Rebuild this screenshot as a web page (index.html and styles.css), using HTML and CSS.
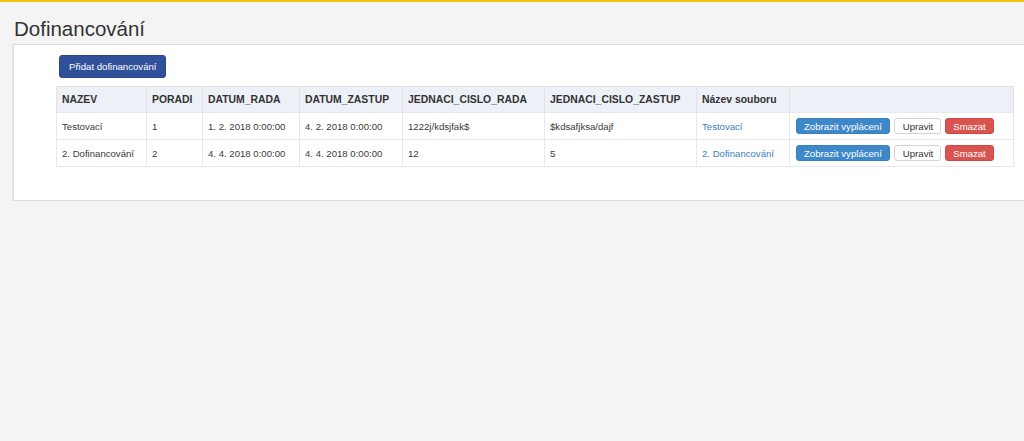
FILE: index.html
```html
<!DOCTYPE html>
<html lang="cs">
<head>
<meta charset="utf-8">
<title>Dofinancování</title>
<link rel="stylesheet" href="styles.css">
</head>
<body>
<div class="topbar"></div>
<h1 class="title">Dofinancování</h1>
<div class="panel">
  <button class="btn btn-add">Přidat dofinancování</button>
  <table class="grid">
    <colgroup>
      <col class="c1"><col class="c2"><col class="c3"><col class="c4"><col class="c5"><col class="c6"><col class="c7"><col class="c8">
    </colgroup>
    <thead>
      <tr>
        <th>NAZEV</th>
        <th>PORADI</th>
        <th>DATUM_RADA</th>
        <th>DATUM_ZASTUP</th>
        <th>JEDNACI_CISLO_RADA</th>
        <th>JEDNACI_CISLO_ZASTUP</th>
        <th>Název souboru</th>
        <th></th>
      </tr>
    </thead>
    <tbody>
      <tr>
        <td>Testovací</td>
        <td>1</td>
        <td>1. 2. 2018 0:00:00</td>
        <td>4. 2. 2018 0:00:00</td>
        <td>1222j/kdsjfak$</td>
        <td>$kdsafjksa/dajf</td>
        <td><a href="#" class="link">Testovací</a></td>
        <td class="act-cell"><div class="actions"><button class="btn btn-sm btn-info">Zobrazit vyplácení</button><button class="btn btn-sm btn-default">Upravit</button><button class="btn btn-sm btn-danger">Smazat</button></div></td>
      </tr>
      <tr>
        <td>2. Dofinancování</td>
        <td>2</td>
        <td>4. 4. 2018 0:00:00</td>
        <td>4. 4. 2018 0:00:00</td>
        <td>12</td>
        <td>5</td>
        <td><a href="#" class="link">2. Dofinancování</a></td>
        <td class="act-cell"><div class="actions"><button class="btn btn-sm btn-info">Zobrazit vyplácení</button><button class="btn btn-sm btn-default">Upravit</button><button class="btn btn-sm btn-danger">Smazat</button></div></td>
      </tr>
    </tbody>
  </table>
</div>
</body>
</html>
```
FILE: styles.css
```css
html, body {
  margin: 0;
  padding: 0;
  background: #f4f4f4;
  overflow: hidden;
}
body {
  font-family: "Liberation Sans", Arial, sans-serif;
  color: #333;
}
.topbar {
  height: 2px;
  background: #f0c40c;
}
.title {
  margin: 16px 0 0 14px;
  font-size: 20.5px;
  line-height: 22px;
  font-weight: normal;
  color: #333;
}
.panel {
  margin: 4px 0 0 13px;
  width: calc(100% + 20px);
  background: #fff;
  border: 1px solid #dcdcdc;
  box-shadow: 0 1px 2px rgba(0,0,0,0.15);
  padding: 10px 0 33px 42px;
  box-sizing: border-box;
}
.btn {
  font-family: "Liberation Sans", Arial, sans-serif;
  display: inline-block;
  cursor: pointer;
  border: 1px solid transparent;
  border-radius: 3px;
  margin: 0;
}
.btn-add {
  margin-left: 3px;
  background: #30509a;
  border-color: #2b478a;
  color: #fff;
  font-size: 9.6px;
  line-height: 13px;
  padding: 4px 9px 4px;
  height: 23px;
}
.grid {
  margin-top: 8px;
  width: 957px;
  table-layout: fixed;
  border-collapse: collapse;
  font-size: 9.6px;
  border: 1px solid #e2e2e2;
  color: #3a3a3a;
}
.c1 { width: 90px; }
.c2 { width: 56px; }
.c3 { width: 97px; }
.c4 { width: 103px; }
.c5 { width: 142px; }
.c6 { width: 152px; }
.c7 { width: 93px; }
.c8 { width: 224px; }
.grid th {
  background: #edf0f6;
  color: #333;
  font-size: 10.4px;
  font-weight: bold;
  text-align: left;
  padding: 6px 5px 6px 5px;
  line-height: 13px;
  border: 1px solid #e2e2e2;
  border-bottom-color: #e8e8e8;
}
.grid td {
  padding: 5px 5px;
  line-height: 15px;
  border: 1px solid #e8e8e8;
  white-space: nowrap;
}
.grid td.act-cell {
  padding-left: 6px;
}
.link {
  color: #3a7fc0;
  text-decoration: none;
}
.actions {
  display: flex;
  gap: 4px;
}
.btn-sm {
  font-size: 9.6px;
  line-height: 13px;
  height: 16px;
  padding: 0 8px;
}
.btn-info {
  background: #3e87c9;
  border-color: #3a80bf;
  color: #fff;
  padding: 0 7px;
}
.btn-default {
  background: #fff;
  border-color: #d4d4d4;
  color: #333;
  padding: 0 7px 0 8px;
}
.btn-danger {
  background: #d9534f;
  border-color: #d24743;
  color: #fff;
  padding: 0 7px;
}
```
